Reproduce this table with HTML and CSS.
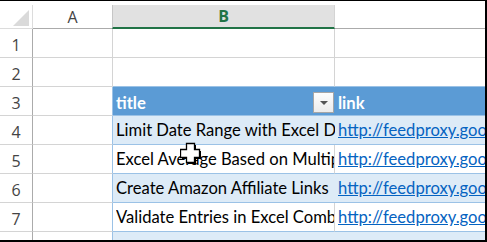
FILE: index.html
```html
<!DOCTYPE html>
<html lang="en">
<head>
    <meta charset="UTF-8">
    <title>Sheet</title>
    <link rel="stylesheet" href="styles.css">
</head>
<body>
    <div class="sheet">
        <div class="top-gap"></div>
        <div class="row col-heads">
            <div class="cell corner"><span class="corner-tri"></span></div>
            <div class="cell col-head">A</div>
            <div class="cell col-head selected">B</div>
            <div class="cell col-head blank"></div>
        </div>
        <div class="row">
            <div class="cell row-head">1</div>
            <div class="cell"></div>
            <div class="cell"></div>
            <div class="cell"></div>
        </div>
        <div class="row">
            <div class="cell row-head">2</div>
            <div class="cell"></div>
            <div class="cell above-table"></div>
            <div class="cell above-table"></div>
        </div>
        <div class="row">
            <div class="cell row-head">3</div>
            <div class="cell beside-table"></div>
            <div class="cell table-head">
                <span>title</span>
                <span class="filter-btn"><span class="filter-arrow"></span></span>
            </div>
            <div class="cell table-head"><span>link</span></div>
        </div>
        <div class="row">
            <div class="cell row-head">4</div>
            <div class="cell beside-table"></div>
            <div class="cell band"><span class="clip">Limit Date Range with Excel D</span></div>
            <div class="cell band"><a class="link" href="#">http://feedproxy.goo</a></div>
        </div>
        <div class="row">
            <div class="cell row-head">5</div>
            <div class="cell beside-table"></div>
            <div class="cell plain"><span class="clip">Excel Average Based on Multip</span></div>
            <div class="cell plain"><a class="link" href="#">http://feedproxy.goo</a></div>
        </div>
        <div class="row">
            <div class="cell row-head">6</div>
            <div class="cell beside-table"></div>
            <div class="cell band"><span class="clip">Create Amazon Affiliate Links</span></div>
            <div class="cell band"><a class="link" href="#">http://feedproxy.goo</a></div>
        </div>
        <div class="row">
            <div class="cell row-head">7</div>
            <div class="cell beside-table"></div>
            <div class="cell plain"><span class="clip">Validate Entries in Excel Comb</span></div>
            <div class="cell plain"><a class="link" href="#">http://feedproxy.goo</a></div>
        </div>
        <div class="row last">
            <div class="cell row-head"></div>
            <div class="cell beside-table"></div>
            <div class="cell band"></div>
            <div class="cell band"></div>
        </div>

        <svg class="cursor" width="22" height="23" viewBox="0 0 22 23">
            <path d="M8 3h8v6h5v8h-5v5h-8v-5h-6v-8h6z" fill="#000"/>
            <path d="M6.5 1.5h8v6h5v8h-5v5h-8v-5h-6v-8h6z" fill="#fff" stroke="#000" stroke-width="1.3"/>
        </svg>
    </div>
</body>
</html>
```

FILE: styles.css
```css
body {
    margin: 0;
    padding: 0;
    background: #fff;
}
.sheet {
    position: relative;
    width: 487px;
    height: 242px;
    box-sizing: border-box;
    border-top: 1px solid #000;
    border-right: 2px solid #000;
    border-bottom: 2px solid #000;
    overflow: hidden;
    background: #fff;
}
.top-gap {
    height: 4px;
}
.row {
    display: grid;
    grid-template-columns: 33px 80px 222px 150px;
    height: 29px;
}
.row.col-heads {
    height: 24px;
}
.row.last {
    height: 8px;
}
.cell {
    box-sizing: border-box;
    border-right: 1px solid #d4d4d4;
    border-bottom: 1px solid #d4d4d4;
    overflow: hidden;
    white-space: nowrap;
    display: flex;
    align-items: flex-end;
    font-family: 'Lato', sans-serif;
    font-size: 16.6px;
    line-height: 20px;
    color: #000;
    padding: 0 0 4px 3px;
}
.row.last .cell {
    border-bottom: none;
}
.cell:last-child {
    border-right: none;
}
.clip {
    display: block;
    overflow: hidden;
}
.corner,
.col-head {
    border-bottom: 1px solid #ababab;
    border-right: 1px solid #d4d4d4;
    position: relative;
    justify-content: center;
    align-items: center;
    padding: 0;
    font-family: 'Open Sans', sans-serif;
    font-size: 16px;
    color: #444;
}
.corner {
    border-right: 1px solid #dcdcdc;
    border-bottom: 1px solid #dcdcdc;
}
.corner-tri {
    position: absolute;
    right: 3px;
    bottom: 2px;
    width: 0;
    height: 0;
    border-left: 16px solid transparent;
    border-bottom: 16px solid #dadada;
}
.col-head.selected {
    background: #e1e1e1;
    color: #217346;
    font-weight: 700;
    border-left: 1px solid #c6c6c6;
    border-bottom: 2px solid #217346;
    margin-left: -1px;
}
.col-head.blank {
    border-bottom: 1px solid #ababab;
}
.row-head {
    justify-content: center;
    align-items: center;
    padding: 3px 0 0 0;
    font-family: 'Open Sans', sans-serif;
    font-size: 16px;
    color: #444;
    border-right: 1px solid #ababab;
}
.above-table {
    border-bottom-color: #9bc2e6;
}
.beside-table {
    border-right-color: #9bc2e6;
}
.table-head {
    background: #5b9bd5;
    color: #fff;
    font-weight: 700;
    border-right: none;
    border-bottom: 1px solid #9bc2e6;
    justify-content: space-between;
    align-items: center;
    padding: 3px 0 0 3px;
}
.filter-btn {
    width: 21px;
    height: 21px;
    box-sizing: border-box;
    background: linear-gradient(#fdfdfd, #ececec);
    border: 1px solid #a6a6a6;
    display: flex;
    align-items: center;
    justify-content: center;
    margin-right: 1px;
    margin-top: -1px;
}
.filter-arrow {
    width: 0;
    height: 0;
    border-left: 4px solid transparent;
    border-right: 4px solid transparent;
    border-top: 4px solid #555;
    margin-top: 1px;
}
.band {
    background: #ddebf7;
    border-bottom-color: #9bc2e6;
    border-right: none;
}
.plain {
    background: #fff;
    border-bottom-color: #9bc2e6;
}
.link {
    color: #0563c1;
    text-decoration: underline;
}
.cursor {
    position: absolute;
    left: 180px;
    top: 141px;
}
```
